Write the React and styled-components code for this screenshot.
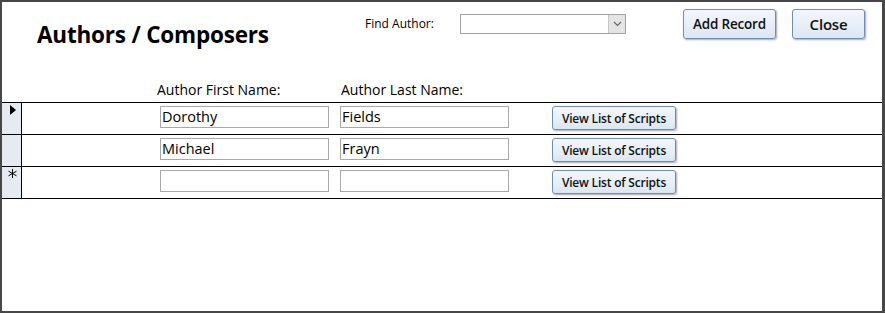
import React from 'react'
import styled, { createGlobalStyle } from 'styled-components'

const GlobalStyle = createGlobalStyle`
  html, body {
    margin: 0;
    padding: 0;
    background: #fff;
  }
  * {
    box-sizing: border-box;
  }
`

const Frame = styled.div`
  width: 885px;
  height: 313px;
  background: #fff;
  border-style: solid;
  border-color: #474747;
  border-width: 2px 3px 2px 2px;
  font-family: 'Open Sans', 'Noto Sans', sans-serif;
  color: #000;
  display: flex;
  flex-direction: column;
`

const Header = styled.div`
  height: 75px;
  display: flex;
  align-items: flex-start;
`

const Title = styled.h1`
  margin: 0;
  width: 363px;
  padding: 18px 0 0 35px;
  font-size: 22.5px;
  font-weight: 700;
  letter-spacing: -0.2px;
  line-height: 30px;
`

const FindLabel = styled.span`
  width: 95px;
  padding-top: 13px;
  font-size: 12px;
  line-height: 18px;
`

const Combo = styled.div`
  margin-top: 12px;
  width: 166px;
  height: 20px;
  border: 1px solid #a2a2a2;
  display: flex;
  justify-content: flex-end;
  background: #fff;
`

const ComboButton = styled.div`
  width: 17px;
  height: 100%;
  background: #e4e4e4;
  border-left: 1px solid #c6c6c6;
  display: flex;
  align-items: center;
  justify-content: center;
`

const Buttons = styled.div`
  margin-left: 57px;
  margin-top: 7px;
  display: flex;
  gap: 16px;
`

const Button = styled.button`
  width: ${p => p.$w}px;
  height: ${p => p.$h}px;
  margin-top: ${p => p.$top || 0}px;
  padding: 0;
  border: 1px solid #6f8db5;
  border-radius: 3px;
  background: linear-gradient(#f4f7fc, #dbe6f4);
  box-shadow: 1px 1px 2px rgba(0, 0, 0, 0.35);
  font-family: 'Open Sans', 'Noto Sans', sans-serif;
  font-weight: 600;
  font-size: ${p => p.$size}px;
  color: #111;
  letter-spacing: -0.2px;
`

const LabelRow = styled.div`
  height: 25px;
  display: flex;
  align-items: center;
  padding-left: 155px;
  font-size: 14px;
`

const ColLabel = styled.span`
  width: ${p => p.$w}px;
`

const Rows = styled.div`
  border-top: 1px solid #000;
`

const Row = styled.div`
  height: 32px;
  display: flex;
  border-bottom: 1px solid #000;
`

const Selector = styled.div`
  width: 20px;
  background: #e6ebf1;
  border-right: 1px solid #000;
  display: flex;
  justify-content: center;
  padding-top: 2px;
  padding-left: 2px;
`

const TextBox = styled.div`
  margin-top: 3px;
  margin-left: ${p => p.$left}px;
  width: 169px;
  height: 22px;
  border: 1px solid #a8a8a8;
  font-size: 14.5px;
  line-height: 20px;
  padding-left: 1px;
`

const ScriptsButton = styled(Button)`
  margin-left: 43px;
`

const authors = [
  { first: 'Dorothy', last: 'Fields', current: true },
  { first: 'Michael', last: 'Frayn' },
  { first: '', last: '', isNew: true },
]

const Arrow = () => (
  <svg width="6" height="10" viewBox="0 0 6 10">
    <path d="M0 0 L6 5 L0 10 Z" fill="#000" />
  </svg>
)

const Star = () => (
  <svg width="9" height="9" viewBox="0 0 9 9" stroke="#000" strokeWidth="1">
    <path d="M4.5 0 V9 M0.5 2.2 L8.5 6.8 M0.5 6.8 L8.5 2.2" />
  </svg>
)

const Chevron = () => (
  <svg width="9" height="6" viewBox="0 0 9 6">
    <path d="M1 1 L4.5 4.5 L8 1" fill="none" stroke="#666" strokeWidth="1.2" />
  </svg>
)

export default function App() {
  return (
    <>
      <GlobalStyle />
      <Frame>
        <Header>
          <Title>Authors / Composers</Title>
          <FindLabel>Find Author:</FindLabel>
          <Combo>
            <ComboButton>
              <Chevron />
            </ComboButton>
          </Combo>
          <Buttons>
            <Button $w={93} $h={30} $size={13.5}>Add Record</Button>
            <Button $w={73} $h={30} $size={15}>Close</Button>
          </Buttons>
        </Header>

        <LabelRow>
          <ColLabel $w={184}>Author First Name:</ColLabel>
          <ColLabel>Author Last Name:</ColLabel>
        </LabelRow>

        <Rows>
          {authors.map((a, i) => (
            <Row key={i}>
              <Selector>
                {a.current && <Arrow />}
                {a.isNew && <Star />}
              </Selector>
              <TextBox $left={138}>{a.first}</TextBox>
              <TextBox $left={11}>{a.last}</TextBox>
              <ScriptsButton $w={124} $h={24} $top={3} $size={12}>View List of Scripts</ScriptsButton>
            </Row>
          ))}
        </Rows>
      </Frame>
    </>
  )
}
